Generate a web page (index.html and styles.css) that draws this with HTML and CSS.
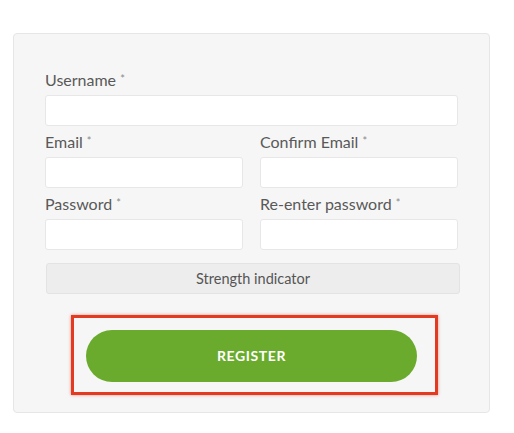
FILE: index.html
```html
<!DOCTYPE html>
<html lang="en">
<head>
<meta charset="utf-8">
<title>Register</title>
<link rel="stylesheet" href="styles.css">
</head>
<body>
<form class="card">
  <div class="field">
    <label class="label">Username <span class="req">*</span></label>
    <div class="input"></div>
  </div>
  <div class="row">
    <div class="field">
      <label class="label">Email <span class="req">*</span></label>
      <div class="input"></div>
    </div>
    <div class="field">
      <label class="label">Confirm Email <span class="req">*</span></label>
      <div class="input"></div>
    </div>
  </div>
  <div class="row">
    <div class="field">
      <label class="label">Password <span class="req">*</span></label>
      <div class="input"></div>
    </div>
    <div class="field">
      <label class="label">Re-enter password <span class="req">*</span></label>
      <div class="input"></div>
    </div>
  </div>
  <div class="strength">Strength indicator</div>
  <div class="highlight">
    <div class="btn">REGISTER</div>
  </div>
</form>
</body>
</html>
```
FILE: styles.css
```css
html, body {
  margin: 0;
  padding: 0;
  background: #ffffff;
}
body {
  padding: 33px 0 0 13px;
  font-family: Lato, "Open Sans", sans-serif;
  color: #545454;
}
.card {
  box-sizing: border-box;
  width: 477px;
  height: 380px;
  background: #f6f6f6;
  border: 1px solid #e6e6e6;
  border-radius: 4px;
  padding: 35px 31px 0 31px;
  display: flex;
  flex-direction: column;
}
.field {
  display: flex;
  flex-direction: column;
  margin-bottom: 5px;
}
.row {
  display: flex;
  gap: 17px;
}
.row .field {
  flex: 1;
}
.label {
  font-size: 16px;
  line-height: 20px;
  margin-bottom: 5px;
  color: #595959;
}
.req {
  font-size: 11px;
  color: #8a8a8a;
  vertical-align: 3px;
}
.input {
  box-sizing: border-box;
  height: 31px;
  background: #ffffff;
  border: 1px solid #e7e7e7;
  border-radius: 3px;
}
.strength {
  box-sizing: border-box;
  height: 31px;
  margin: 8px -2px 0 1px;
  background: #ededed;
  border: 1px solid #e3e3e3;
  border-radius: 3px;
  font-size: 14.5px;
  line-height: 29px;
  text-align: center;
  color: #555555;
}
.highlight {
  box-sizing: border-box;
  width: 367px;
  margin: 21px 0 0 26px;
  padding: 12px 18px 10px 12px;
  border: 3px solid #e23b22;
  box-shadow: 0 0 3px rgba(226, 59, 34, 0.55);
}
.btn {
  height: 52px;
  border-radius: 26px;
  background: #6aab2d;
  color: #ffffff;
  font-weight: 700;
  font-size: 14px;
  line-height: 52px;
  text-align: center;
  letter-spacing: 0.6px;
}
```
